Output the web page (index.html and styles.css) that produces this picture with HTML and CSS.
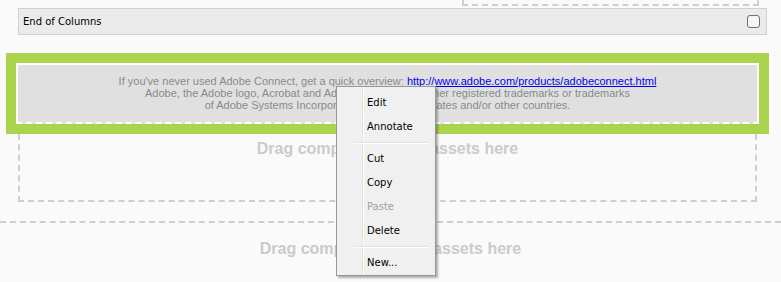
FILE: index.html
```html
<!DOCTYPE html>
<html lang="en">
<head>
    <meta charset="UTF-8">
    <meta name="viewport" content="width=device-width, initial-scale=1.0">

    <title>Layout editor</title>

    <link rel="stylesheet" href="styles.css">
</head>
<body>
    <div class="drop-tail"></div>

    <div class="end-bar">
        <span>End of Columns</span>
        <input type="checkbox" class="end-check">
    </div>

    <div class="selected">
        <div class="notice">
            If you've never used Adobe Connect, get a quick overview: <a href="#">http://www.adobe.com/products/adobeconnect.html</a><br>
            Adobe, the Adobe logo, Acrobat and Adobe Connect are either registered trademarks or trademarks<br>
            of Adobe Systems Incorporated in the United States and/or other countries.
        </div>
    </div>

    <div class="drop-zone">Drag components and assets here</div>

    <div class="drop-page">Drag components and assets here</div>

    <!-- right click menu -->
    <ul class="context-menu">
        <li>Edit</li>
        <li>Annotate</li>
        <li class="sep"></li>
        <li>Cut</li>
        <li>Copy</li>
        <li class="disabled">Paste</li>
        <li>Delete</li>
        <li class="sep"></li>
        <li>New...</li>
    </ul>
</body>
</html>
```

FILE: styles.css
```css
:root {
    --green: #abd44e;
    --dash: #cfcfcf;
}
body {
    margin: 0;
    height: 282px;
    overflow: hidden;
    background-color: #fafafa;
    font-family: "DejaVu Sans", sans-serif;
    position: relative;
}

.drop-tail {
    margin-left: 462px;
    width: 293px;
    height: 4px;
    border: 2px dashed var(--dash);
    border-top: none;
}

.end-bar {
    margin: 2px 0 0 18px;
    width: 737px;
    height: 25px;
    display: flex;
    align-items: center;
    justify-content: space-between;
    padding: 0 6px 0 4px;
    box-sizing: content-box;
    background-color: #ebebeb;
    border: 1px solid #d0d0d0;
    font-size: 10px;
    color: #000;
}
.end-check {
    appearance: none;
    margin: 0;
    width: 13px;
    height: 13px;
    border: 1px solid #707070;
    border-radius: 3px;
    background-color: #f6f6f6;
}

.selected {
    margin: 18px 0 0 6px;
    width: 743px;
    padding: 10px;
    background-color: var(--green);
    position: relative;
    z-index: 1;
}
.notice {
    border: 2px solid #fff;
    border-bottom: 2px dashed #fff;
    background-color: #e0e0e0;
    padding: 10px 0 11px;
    text-align: center;
    font-family: "Liberation Sans", Arial, sans-serif;
    font-size: 11px;
    line-height: 12px;
    color: #8a8a8a;
}
.notice a {
    color: #0000ee;
}

.drop-zone,
.drop-page {
    font-family: "Liberation Sans", Arial, sans-serif;
    font-weight: bold;
    font-size: 16px;
    color: #cbcbcb;
    text-align: center;
}
.drop-zone {
    margin-left: 18px;
    width: 735px;
    height: 60px;
    padding-top: 6px;
    border: 2px dashed var(--dash);
    border-top: none;
}
.drop-page {
    margin-top: 19px;
    border-top: 2px dashed var(--dash);
    padding-top: 17px;
}

.context-menu {
    position: absolute;
    left: 336px;
    top: 86px;
    width: 98px;
    margin: 0;
    padding: 4px 0 0;
    height: 184px;
    list-style: none;
    background-color: #f0f0f0;
    border: 1px solid #979797;
    box-shadow: 2px 2px 2px rgba(0, 0, 0, 0.3);
    background-image: linear-gradient(to right, transparent 25px, #e2e2e2 25px, #e2e2e2 26px, #fff 26px, #fff 27px, transparent 27px);
    z-index: 2;
    font-size: 10px;
}
.context-menu li {
    height: 24px;
    line-height: 24px;
    padding-left: 30px;
    color: #000;
}
.context-menu li.disabled {
    color: #a0a0a0;
}
.context-menu li.sep {
    height: 8px;
    margin-left: 17px;
    padding: 0;
    background: linear-gradient(#e2e2e2, #e2e2e2) no-repeat 0 3px / 100% 1px,
                linear-gradient(#fff, #fff) no-repeat 0 4px / 100% 1px;
    margin-right: 6px;
}
```
